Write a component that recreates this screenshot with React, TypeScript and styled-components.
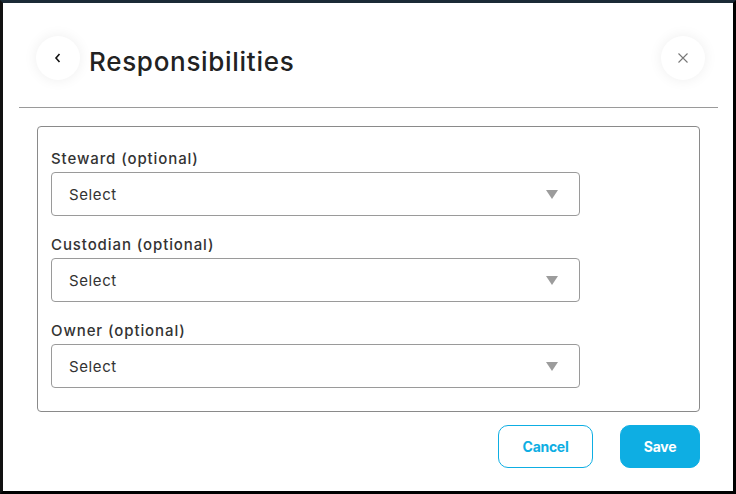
import React from "react";
import styled, { createGlobalStyle } from "styled-components";

const Global = createGlobalStyle`
  html, body { margin: 0; padding: 0; background: #000; }
  * { box-sizing: border-box; }
  body { font-family: "Inter", "Open Sans", sans-serif; }
`;

const Frame = styled.div`
  width: 736px;
  height: 494px;
  border-top: 3px solid #1b2a36;
  border-left: 3px solid #111;
  border-right: 3px solid #000;
  border-bottom: 3px solid #000;
  background: #fff;
  display: flex;
  flex-direction: column;
`;

const Header = styled.div`
  display: flex;
  align-items: center;
  padding: 33px 28px 0 33px;
  height: 77px;
`;

const CircleButton = styled.button`
  width: 44px;
  height: 44px;
  border-radius: 50%;
  border: none;
  background: #fff;
  box-shadow: 0 0 14px rgba(0, 0, 0, 0.07);
  display: flex;
  align-items: center;
  justify-content: center;
  padding: 0;
  cursor: pointer;
  flex-shrink: 0;
`;

const Title = styled.h1`
  margin: 0 0 0 9px;
  padding-top: 6px;
  font-size: 26px;
  font-weight: 500;
  color: #222;
  letter-spacing: 0.7px;
  flex: 1;
`;

const Divider = styled.hr`
  margin: 27px 15px 0 16px;
  border: none;
  border-top: 1px solid #9a9a9a;
  height: 0;
`;

const FormBox = styled.div`
  margin: 18px 33px 0 34px;
  border: 1px solid #8a8a8a;
  border-radius: 4px;
  padding: 22px 13px 23px 13px;
  display: flex;
  flex-direction: column;
  gap: 19px;
`;

const Field = styled.div`
  display: flex;
  flex-direction: column;
  gap: 3px;
`;

const Label = styled.label`
  font-size: 15px;
  line-height: 20px;
  color: #333;
  font-weight: 500;
  letter-spacing: 0.9px;
`;

const SelectBox = styled.div`
  width: 529px;
  height: 44px;
  border: 1px solid #9a9a9a;
  border-radius: 4px;
  display: flex;
  align-items: center;
  justify-content: space-between;
  padding: 1px 21px 0 17px;
  font-size: 15px;
  color: #333;
  letter-spacing: 0.6px;
`;

const Arrow = styled.span`
  width: 0;
  height: 0;
  border-left: 6px solid transparent;
  border-right: 6px solid transparent;
  border-top: 9px solid #9c9c9c;
`;

const Actions = styled.div`
  display: flex;
  justify-content: flex-end;
  gap: 27px;
  margin: 13px 33px 0 0;
`;

const Btn = styled.button<{ $primary?: boolean }>`
  height: 43px;
  width: ${(p) => (p.$primary ? "80px" : "95px")};
  border-radius: 10px;
  border: 1px solid #0eaee3;
  background: ${(p) => (p.$primary ? "#0eaee3" : "#fff")};
  color: ${(p) => (p.$primary ? "#fff" : "#0eaee3")};
  font-family: "Inter", "Open Sans", sans-serif;
  font-size: 14px;
  font-weight: 700;
  letter-spacing: -0.3px;
  cursor: pointer;
`;

const fields = ["Steward (optional)", "Custodian (optional)", "Owner (optional)"];

export default function App() {
  return (
    <>
      <Global />
      <Frame>
        <Header>
          <CircleButton aria-label="Back">
            <svg width="10" height="12" viewBox="0 0 10 12">
              <path d="M6.5 2 L3 6 L6.5 10" stroke="#111" strokeWidth="1.6" fill="none" />
            </svg>
          </CircleButton>
          <Title>Responsibilities</Title>
          <CircleButton aria-label="Close">
            <svg width="12" height="12" viewBox="0 0 12 12">
              <path d="M1.5 1.5 L10.5 10.5 M10.5 1.5 L1.5 10.5" stroke="#777" strokeWidth="1.1" />
            </svg>
          </CircleButton>
        </Header>
        <Divider />
        <FormBox>
          {fields.map((f) => (
            <Field key={f}>
              <Label>{f}</Label>
              <SelectBox>
                <span>Select</span>
                <Arrow />
              </SelectBox>
            </Field>
          ))}
        </FormBox>
        <Actions>
          <Btn>Cancel</Btn>
          <Btn $primary>Save</Btn>
        </Actions>
      </Frame>
    </>
  );
}
